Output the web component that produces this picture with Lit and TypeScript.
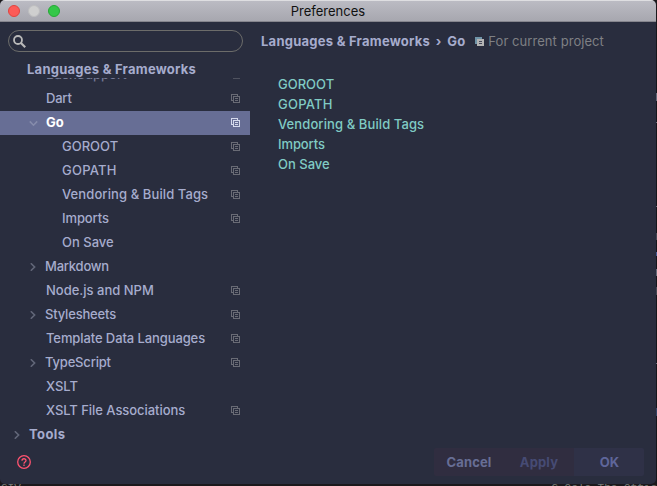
import { LitElement, html, css, svg, nothing } from "lit";
import { customElement, property } from "lit/decorators.js";

interface Item {
  label: string;
  level: number;
  arrow?: "open" | "closed";
  project?: boolean;
  selected?: boolean;
  bold?: boolean;
  track?: number;
}

const ITEMS: Item[] = [
  { label: "BashSupport", level: 1, project: true },
  { label: "Dart", level: 1, project: true, track: -0.2 },
  { label: "Go", level: 1, arrow: "open", project: true, selected: true, bold: true, track: 0 },
  { label: "GOROOT", level: 2, project: true },
  { label: "GOPATH", level: 2, project: true, track: 0.25 },
  { label: "Vendoring & Build Tags", level: 2, project: true, track: 0.1 },
  { label: "Imports", level: 2, project: true, track: -0.1 },
  { label: "On Save", level: 2 },
  { label: "Markdown", level: 1, arrow: "closed", track: -0.22 },
  { label: "Node.js and NPM", level: 1, project: true },
  { label: "Stylesheets", level: 1, arrow: "closed", project: true, track: -0.18 },
  { label: "Template Data Languages", level: 1, project: true, track: -0.1 },
  { label: "TypeScript", level: 1, arrow: "closed", project: true, track: -0.18 },
  { label: "XSLT", level: 1 },
  { label: "XSLT File Associations", level: 1, project: true, track: -0.05 },
  { label: "Tools", level: 0, arrow: "closed", bold: true, track: 0.4 },
];

const LINKS: { label: string; track: number }[] = [
  { label: "GOROOT", track: 0 },
  { label: "GOPATH", track: 0.25 },
  { label: "Vendoring & Build Tags", track: 0.1 },
  { label: "Imports", track: -0.1 },
  { label: "On Save", track: 0 },
];

@customElement("project-icon")
class ProjectIcon extends LitElement {
  @property({ type: Boolean }) filled = false;
  static styles = css`
    :host { display: block; width: 9px; height: 9px; flex: none; }
    svg { display: block; }
  `;
  render() {
    return html`<svg width="9" height="9" viewBox="0 0 9 9" fill="none" stroke="currentColor" shape-rendering="crispEdges">
      ${this.filled
        ? svg`<path d="M0 0H7V2H2V7H0Z" fill="#6f94a8" stroke="none"/><path d="M2 2H9V9H2Z" fill="#b4b4b4" stroke="none"/><path d="M4 4.5H7M4 6.5H7" stroke="#45475a"/>`
        : svg`<path d="M2.5 6.5H.5V.5H6.5V2.5M2.5 2.5H8.5V8.5H2.5ZM4 4.5H7M4 6.5H7"/>`}
    </svg>`;
  }
}

@customElement("tree-row")
class TreeRow extends LitElement {
  @property({ attribute: false }) item!: Item;
  static styles = css`
    :host { display: block; }
    .row { display: flex; align-items: center; height: 24px; box-sizing: border-box; padding: 0 10px 1px 0; color: #a6accd; }
    .l0 { padding-left: 13px; }
    .l1 { padding-left: 29px; }
    .l2 { padding-left: 45px; }
    .arrow { width: 17px; height: 8px; flex: none; color: #626779; }
    .closed { width: 16px; }
    .arrow svg { display: block; }
    .label { flex: 1; white-space: nowrap; margin-top: -1px; }
    .bold { font-weight: 700; }
    project-icon { color: #696b75; }
    .selected { background: #676e95; color: #fff; }
    .selected .arrow { color: #858bab; }
    .selected project-icon { color: #d4d9ec; }
  `;
  render() {
    const i = this.item;
    return html`<div class="row l${i.level} ${i.selected ? "selected" : ""}">
      <span class="arrow ${i.arrow ?? ""}">
        ${i.arrow
          ? html`<svg width="9" height="8" viewBox="0 0 9 8" fill="none" stroke="currentColor" stroke-width="1.6">
              <path d=${i.arrow === "open" ? "M.8 2.4L4.5 6.2L8.2 2.4" : "M1.8 .3L5.6 4L1.8 7.7"} />
            </svg>`
          : nothing}
      </span>
      <span class="label ${i.bold ? "bold" : ""}" style="letter-spacing:${i.track ?? 0}px">${i.label}</span>
      ${i.project ? html`<project-icon></project-icon>` : nothing}
    </div>`;
  }
}

@customElement("app-root")
class AppRoot extends LitElement {
  static styles = css`
    :host {
      display: block; position: relative; width: 657px; height: 486px; overflow: hidden;
      background: #1b191c; font: 500 13px/20px Inter, "Liberation Sans", sans-serif;
      color: #a6accd;
    }
    .window {
      display: flex; flex-direction: column; width: 656px; height: 484px;
      border-radius: 5px; overflow: hidden; background: #292d3e;
    }
    .titlebar {
      display: grid; grid-template-columns: 1fr auto 1fr; align-items: center; height: 22px; flex: none;
      box-sizing: border-box; border-top: 1px solid #dedee1; border-bottom: 1px solid #85858d;
      background: linear-gradient(#bbbbc3, #a7a7af); color: #111; font-weight: 400;
    }
    .lights { display: flex; gap: 8px; padding-left: 8px; }
    .light { width: 12px; height: 12px; border-radius: 50%; box-sizing: border-box; border: 1px solid #e0443f; background: #fc5b57; }
    .light.idle { background: #cfcfcf; border-color: #bdbdbf; }
    .light.zoom { background: #34c748; border-color: #25a935; }
    .main { display: flex; flex: 1; min-height: 0; }
    .side { width: 250px; flex: none; }
    .search {
      display: flex; align-items: center; box-sizing: border-box; width: 235px; height: 22px;
      margin: 8px 0 0 8px; padding-left: 4px; border: 1px solid #6c6c6a; border-radius: 11px; color: #b9b9b9;
    }
    .group {
      margin-top: 5px; padding-left: 27px; height: 21px; line-height: 25px;
      font-weight: 700; white-space: nowrap; letter-spacing: 0.25px;
    }
    .tree { height: 369px; overflow: hidden; display: flex; flex-direction: column; justify-content: flex-end; }
    .tree tree-row:first-child { opacity: 0.6; }
    .content { flex: 1; padding-left: 11px; }
    .crumbs { display: flex; align-items: center; height: 20px; margin-top: 9px; font-weight: 700; white-space: nowrap; letter-spacing: 0.25px; }
    .sep { width: 17px; text-align: center; }
    .crumbs project-icon { margin: 0 4px 0 10px; }
    .scope { font-weight: 400; color: #7f8084; letter-spacing: 0.06px; }
    .links { display: flex; flex-direction: column; margin: 23px 0 0 17px; color: #80cbc4; }
    .footer { display: flex; align-items: center; justify-content: space-between; height: 37px; flex: none; padding: 0 12px 0 17px; }
    .help { display: block; margin-top: -7px; }
    .buttons { display: flex; height: 28px; margin-top: -7px; border-radius: 2px; overflow: hidden; }
    .btn { width: 70px; text-align: center; line-height: 28px; font-weight: 700; letter-spacing: 0.15px; color: #676e95; background: #302d40; }
    .btn.off { color: #464b74; }
    .btn.ok { width: 69px; padding-left: 1px; color: #5f669a; background: #2f3147; }
    .below { display: flex; justify-content: space-between; height: 2px; overflow: hidden; padding-left: 1px; color: #777b76; font: 11px/8px "Liberation Mono", monospace; }
    .edge { position: absolute; right: 0; top: 22px; width: 1px; height: 462px; background: #15161b; }
    .mark { position: absolute; width: 1px; background: #656a78; }
    .m1 { top: 71px; height: 8px; } .m2 { top: 100px; height: 1px; } .m3 { top: 184px; height: 1px; }
    .m4 { top: 211px; height: 7px; opacity: .6; } .m5 { top: 230px; height: 4px; background: #465b96; }
    .m6 { top: 247px; height: 7px; } .m7 { top: 265px; height: 8px; opacity: .6; }
    .m8 { top: 341px; height: 1px; } .m9 { top: 386px; height: 8px; background: #334465; }
  `;
  render() {
    return html`
      <div class="window">
        <div class="titlebar">
          <div class="lights"><span class="light"></span><span class="light idle"></span><span class="light zoom"></span></div>
          <span>Preferences</span>
        </div>
        <div class="main">
          <div class="side">
            <div class="search">
              <svg width="13" height="13" viewBox="0 0 13 13" fill="none" stroke="currentColor">
                <circle cx="5" cy="5" r="4" stroke-width="1.8" /><path d="M8 8L12.2 12.2" stroke-width="2.2" />
              </svg>
            </div>
            <div class="group">Languages &amp; Frameworks</div>
            <div class="tree">${ITEMS.map((item) => html`<tree-row .item=${item}></tree-row>`)}</div>
          </div>
          <div class="content">
            <div class="crumbs">
              <span>Languages &amp; Frameworks</span><span class="sep">›</span><span>Go</span>
              <project-icon filled></project-icon><span class="scope">For current project</span>
            </div>
            <div class="links">${LINKS.map((l) => html`<span style="letter-spacing:${l.track}px">${l.label}</span>`)}</div>
          </div>
        </div>
        <div class="footer">
          <svg class="help" width="14" height="14" viewBox="0 0 14 14" fill="none" stroke="#ff5370" stroke-width="1.3">
            <circle cx="7" cy="7" r="6.3" />
            <path d="M5 5.7C5 3.1 9 3.1 9 5.6C9 7 7 7 7 8.7M7 9.6V11" />
          </svg>
          <div class="buttons"><span class="btn">Cancel</span><span class="btn off">Apply</span><span class="btn ok">OK</span></div>
        </div>
      </div>
      <div class="below"><span>GIV</span><span>G Oslo The Offic</span></div>
      <div class="edge">${[1, 2, 3, 4, 5, 6, 7, 8, 9].map((n) => html`<i class="mark m${n}"></i>`)}</div>
    `;
  }
}
